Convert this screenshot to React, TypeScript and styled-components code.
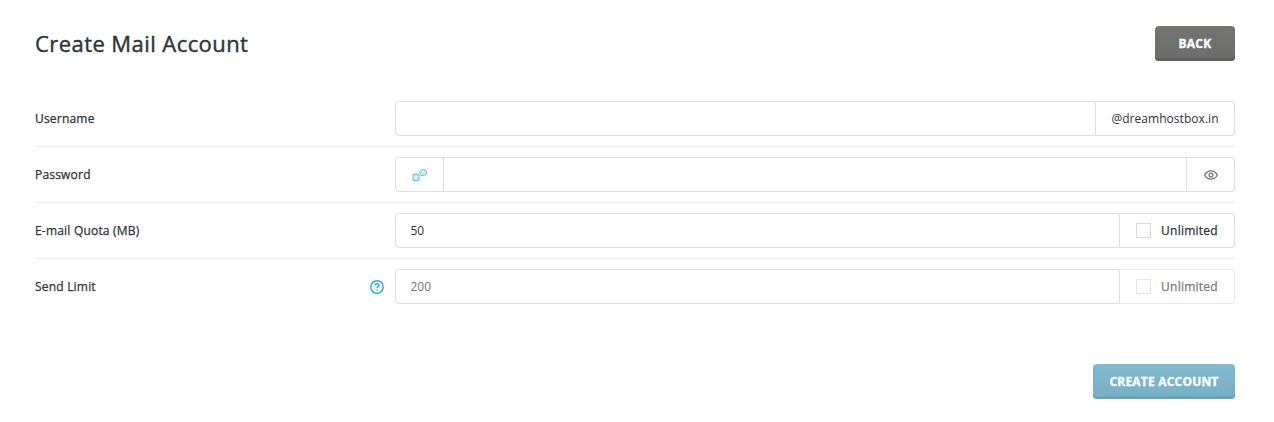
import React from "react";
import styled, { createGlobalStyle } from "styled-components";

const GlobalStyle = createGlobalStyle`
  *, *::before, *::after { box-sizing: border-box; }
  body {
    margin: 0;
    background: #fff;
    color: #2d3438;
    font: 500 12px/17px "Open Sans", sans-serif;
  }
`;

const Page = styled.main`
  padding: 26px 39px 23px 35px;
`;

const Header = styled.header`
  display: flex;
  justify-content: space-between;
  height: 65px;
`;

const Title = styled.h1`
  margin: 0;
  font-size: 22px;
  font-weight: 500;
  line-height: 35px;
  letter-spacing: 0.43px;
  -webkit-text-stroke: 0.4px currentColor;
`;

const Button = styled.button<{ $tone: "grey" | "blue" }>`
  height: 35px;
  width: ${(p) => (p.$tone === "grey" ? "80px" : "142px")};
  padding: 0 0 1px;
  border: 0;
  border-radius: 4px;
  color: #fff;
  font: 700 12px/17px "Open Sans", sans-serif;
  letter-spacing: 0.2px;
  -webkit-text-stroke: 0.3px currentColor;
  text-transform: uppercase;
  white-space: nowrap;
  background: ${(p) =>
    p.$tone === "grey"
      ? "linear-gradient(#737573, #6b6d6b)"
      : "linear-gradient(#82b9ce, #78afc5)"};
  box-shadow: inset 0 -3px 0 ${(p) => (p.$tone === "grey" ? "#5f615f" : "#6da2b7")};
`;

const Row = styled.div`
  display: grid;
  grid-template-columns: 360px 1fr;
  align-items: center;
  height: 56px;
  padding: 10px 0;
  border-bottom: 1px solid #ebecec;

  &:last-of-type {
    height: 55px;
    border-bottom: 0;
  }
`;

const LabelCell = styled.div`
  display: flex;
  align-items: center;
  justify-content: space-between;
  padding-right: 11px;
  letter-spacing: 0.2px;
`;

const LabelText = styled.span`
  -webkit-text-stroke: 0.25px currentColor;
`;

const Group = styled.div`
  display: flex;
  height: 35px;
`;

const Input = styled.input`
  flex: 1;
  min-width: 0;
  height: 35px;
  padding: 0 14.5px 1px;
  border: 1px solid #dedfdf;
  border-radius: 0;
  outline: 0;
  background: #fff;
  color: #2d3438;
  font: 400 12px/17px "Open Sans", sans-serif;

  &:first-child { border-radius: 4px 0 0 4px; }
  &:disabled { color: #777; }
`;

const Addon = styled.div<{ $width: number; $muted?: boolean }>`
  display: flex;
  align-items: center;
  justify-content: center;
  width: ${(p) => p.$width}px;
  border: 1px solid ${(p) => (p.$muted ? "#e8e9e9" : "#dedfdf")};
  color: ${(p) => (p.$muted ? "#777a7c" : "#2d3438")};

  &:first-child { border-right: 0; border-radius: 4px 0 0 4px; }
  &:last-child { border-left: 0; border-radius: 0 4px 4px 0; }
`;

const Suffix = styled.span`
  font-weight: 400;
  letter-spacing: 0.04px;
`;

const CheckLabel = styled.label`
  display: flex;
  align-items: center;
  gap: 10px;
  letter-spacing: 0.24px;
`;

const Checkbox = styled.input<{ $muted?: boolean }>`
  appearance: none;
  width: 15px;
  height: 15px;
  margin: 0;
  border: 1px solid ${(p) => (p.$muted ? "#e4e5e5" : "#d9dada")};
  background: #fff;
`;

const Footer = styled.footer`
  display: flex;
  justify-content: flex-end;
  padding-top: 50px;
`;

const DiceIcon = () => (
  <svg width="16" height="14" viewBox="0 0 16 14" fill="none" stroke="#45b7e3">
    <rect x="1" y="6.2" width="6" height="6.1" rx=".4" />
    <path d="M7.7 4.1 8.9 2.3 12.7 1.4 14.1 3.3 14.6 5.6 12.8 7.2 9.2 7.5Z" strokeLinejoin="round" strokeWidth=".9" />
    <path d="M2.3 7.8h1M4.7 7.8h1M3.5 9.3h1M2.3 10.8h1M4.7 10.8h1M9.6 3.9h1M12 3h1M10.1 6h1M12.5 5.3h1" />
  </svg>
);

const EyeIcon = () => (
  <svg width="16" height="14" viewBox="0 0 16 14" fill="none" stroke="#737573" strokeWidth="1.3">
    <path d="M1.6 7C3 4.4 5.2 2.8 8 2.8S13 4.4 14.4 7C13 9.6 10.8 11.2 8 11.2S3 9.6 1.6 7Z" />
    <circle cx="8" cy="7" r="1.9" />
  </svg>
);

const HelpIcon = () => (
  <svg width="14" height="14" viewBox="0 0 14 14" fill="none" stroke="#22aadd" strokeWidth="1.4">
    <circle cx="7" cy="7" r="6.2" />
    <path d="M5.1 5.6C5.1 4.5 5.9 3.8 7 3.8S8.9 4.5 8.9 5.4C8.9 6.7 7 6.7 7 8.3M7 9.4v1.3" />
  </svg>
);

const Unlimited = ({ muted }: { muted?: boolean }) => (
  <Addon $width={115} $muted={muted}>
    <CheckLabel>
      <Checkbox type="checkbox" disabled={muted} $muted={muted} />
      <LabelText>Unlimited</LabelText>
    </CheckLabel>
  </Addon>
);

export default function App() {
  return (
    <>
      <GlobalStyle />
      <Page>
        <Header>
          <Title>Create Mail Account</Title>
          <Button $tone="grey">Back</Button>
        </Header>
        <section>
          <Row>
            <LabelCell><LabelText>Username</LabelText></LabelCell>
            <Group>
              <Input aria-label="Username" />
              <Addon $width={139}><Suffix>@dreamhostbox.in</Suffix></Addon>
            </Group>
          </Row>
          <Row>
            <LabelCell><LabelText>Password</LabelText></LabelCell>
            <Group>
              <Addon $width={48}><DiceIcon /></Addon>
              <Input type="password" aria-label="Password" />
              <Addon $width={48}><EyeIcon /></Addon>
            </Group>
          </Row>
          <Row>
            <LabelCell><LabelText>E-mail Quota (MB)</LabelText></LabelCell>
            <Group>
              <Input defaultValue="50" aria-label="E-mail Quota (MB)" />
              <Unlimited />
            </Group>
          </Row>
          <Row>
            <LabelCell><LabelText>Send Limit</LabelText><HelpIcon /></LabelCell>
            <Group>
              <Input defaultValue="200" disabled aria-label="Send Limit" />
              <Unlimited muted />
            </Group>
          </Row>
        </section>
        <Footer>
          <Button $tone="blue">Create Account</Button>
        </Footer>
      </Page>
    </>
  );
}
